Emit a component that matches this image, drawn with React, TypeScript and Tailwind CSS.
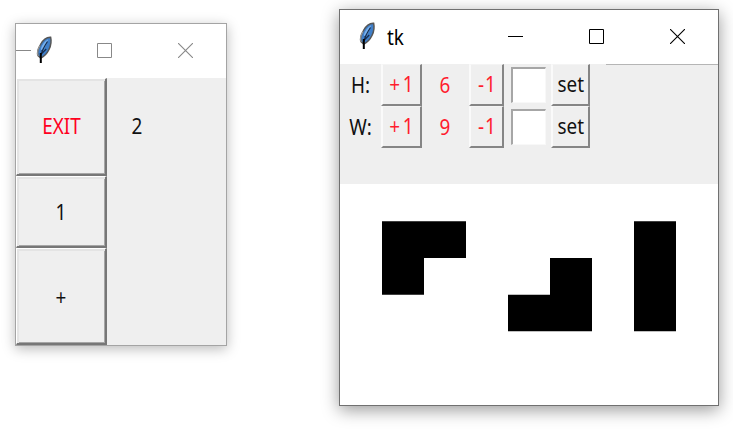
import type { ReactNode } from "react";

function Feather() {
  return (
    <svg width="18" height="28" viewBox="0 0 18 28" className="shrink-0">
      <path d="M15.600 1.200C11.500 1 8 3.800 5.500 8.500 3.200 12.500 1.900 16.500 3 19.500L5.800 22.200C10 20 12.300 17 14 13.500 15.700 10 16.500 5 15.600 1.200Z" fill="#3f7fc9" stroke="#555" strokeWidth="1.500" />
      <path d="M13.200 3.200C9.600 5 7 8.800 5.800 13l1 1.500 1.600-3 .6 1.500 2.600-5.500Z" fill="#79b2ee" />
      <path d="M5 9.500C2.800 13 1.800 17 3.300 20" stroke="#999" strokeWidth="1.200" fill="none" />
      <path d="M12.500 5.500C9.500 10 7 14.500 6 19M7 14l.4 3 3.800-4" stroke="#172b49" strokeWidth="1.200" fill="none" />
      <path d="M5.800 17v10" stroke="#000" strokeWidth="2" />
    </svg>
  );
}

function Maximize() {
  return <svg width="15" height="15" viewBox="0 0 15 15" className="shrink-0"><path d="M.5.5h14v14H.5Z" fill="none" stroke="currentColor" /></svg>;
}

function Close() {
  return <svg width="15" height="15" viewBox="0 0 15 15" className="shrink-0"><path d="M0 0l15 15M15 0L0 15" stroke="currentColor" strokeWidth="1.100" /></svg>;
}

function Label({ children }: { children: ReactNode }) {
  return <span className="inline-block scale-x-[.9] whitespace-nowrap">{children}</span>;
}

function Raised({ size, children }: { size: string; children: ReactNode }) {
  return (
    <button className={`${size} flex w-[91px] shrink-0 items-center justify-center border-t border-l border-r-2 border-b-2 border-t-white border-l-white border-r-[#777] border-b-[#777] bg-[#efefef] shadow-[inset_2px_2px_0_#e4e4e4,inset_-1px_-1px_0_#a6a6a6]`}>
      <Label>{children}</Label>
    </button>
  );
}

function Small({ width, children }: { width: string; children: ReactNode }) {
  return (
    <button className={`${width} flex h-[42px] shrink-0 items-center justify-center border-t border-l-2 border-r-2 border-b-2 border-t-[#f4f4f4] border-l-[#fafafa] border-r-[#858585] border-b-[#858585] bg-[#efefef]`}>
      <Label>{children}</Label>
    </button>
  );
}

function SizeRow({ name, value }: { name: string; value: number }) {
  return (
    <div className="flex h-[42px] items-center">
      <div className="flex w-[41px] justify-center"><Label>{name}</Label></div>
      <div className="flex text-[#ff1c2e]">
        <Small width="w-[41px]"><span className="tracking-[3px]">+</span>1</Small>
        <div className="flex w-[47px] items-center justify-center"><Label>{value}</Label></div>
        <Small width="w-[35px]"><span className="tracking-[1px]">-</span>1</Small>
      </div>
      <input aria-label={name} className="mr-[5px] ml-[7px] h-[36px] w-[35px] border-t-2 border-l-2 border-r border-b border-t-[#a6a6a6] border-l-[#a6a6a6] border-r-[#f8f8f8] border-b-[#f8f8f8] bg-white outline-none" />
      <Small width="w-[39px]">set</Small>
    </div>
  );
}

export default function App() {
  return (
    <main className="relative h-[443px] w-[733px] overflow-hidden bg-white font-['Noto_Sans',sans-serif] text-[21px] leading-none text-[#111]">
      <section className="absolute top-[23px] left-[15px] flex h-[323px] w-[212px] flex-col border border-[#a4a4a4] bg-[#efefef] shadow-[0_3px_12px_rgba(0,0,0,.27)]">
        <header className="flex h-[54px] shrink-0 items-center bg-white text-[#888]">
          <div className="mb-px h-px w-[15px] shrink-0 bg-[#888]" />
          <div className="ml-[4px] pb-[2px]"><Feather /></div>
          <div className="ml-[44px] pb-px"><Maximize /></div>
          <div className="ml-[66px] pb-px"><Close /></div>
        </header>
        <div className="flex">
          <div className="flex flex-col">
            <div className="text-[#ff001e]"><Raised size="h-[98px]">EXIT</Raised></div>
            <Raised size="h-[72px]"><span className="block pt-px">1</span></Raised>
            <Raised size="h-[97px]"><span className="block pt-[2px]">+</span></Raised>
          </div>
          <div className="flex h-[97px] w-[60px] items-center justify-center"><Label>2</Label></div>
        </div>
      </section>

      <section className="absolute top-[9px] left-[339px] flex h-[397px] w-[380px] flex-col border border-[#707070] bg-white shadow-[0_4px_16px_rgba(0,0,0,.4)]">
        <header className="flex h-[54px] shrink-0 items-center bg-white text-black">
          <div className="ml-[18px] pb-[2px]"><Feather /></div>
          <div className="ml-[10px] w-[25px]"><Label>tk</Label></div>
          <div className="mb-px ml-[97px] h-px w-[15px] bg-black" />
          <div className="ml-[66px] pb-px"><Maximize /></div>
          <div className="ml-[66px] pb-px"><Close /></div>
        </header>
        <div className="flex h-[120px] shrink-0 flex-col bg-[#efefef]">
          <div className="ml-[266px] h-px shrink-0 bg-[#b5b5b5]" />
          <div className="-mt-px"><SizeRow name="H:" value={6} /></div>
          <SizeRow name="W:" value={9} />
        </div>
        <svg width="378" height="221" viewBox="0 0 378 221" className="shrink-0">
          <path d="M42 37.300h84V74H84v36.700H42ZM210 74h42v73.300h-84v-36.600h42ZM294 37.300h42v110h-42Z" fill="black" />
        </svg>
      </section>
    </main>
  );
}
